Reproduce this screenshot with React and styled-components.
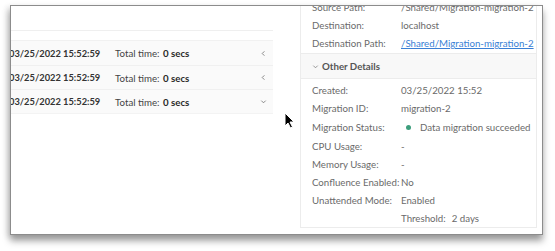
import React from 'react';
import styled, { createGlobalStyle } from 'styled-components';

const GlobalStyle = createGlobalStyle`
  html, body {
    margin: 0;
    padding: 0;
    background: #ffffff;
  }
  body {
    font-family: Lato, "Liberation Sans", sans-serif;
    -webkit-font-smoothing: antialiased;
  }
`;

const Stage = styled.div`
  position: relative;
  width: 555px;
  height: 251px;
  padding: 5px 0 0 10px;
  box-sizing: border-box;
  overflow: hidden;
`;

const Window = styled.div`
  width: 533px;
  height: 230px;
  box-sizing: border-box;
  border: 1px solid #8c8c8c;
  background: #ffffff;
  box-shadow: 0 6px 7px rgba(0, 0, 0, 0.35), -3px 2px 6px rgba(0, 0, 0, 0.12);
  display: flex;
  overflow: hidden;
`;

const LeftPane = styled.div`
  width: 262px;
  flex: none;
  overflow: hidden;
  padding-top: 24px;
`;

const TopRule = styled.div`
  width: 266px;
  height: 11px;
  border-top: 1px solid #efefef;
  border-bottom: 1px solid #f1f1f1;
  box-sizing: border-box;
`;

const RunList = styled.div`
  width: 262px;
  background: #fafafa;
  border-bottom: 1px solid #f3f3f3;
`;

const RunRow = styled.div`
  height: 24px;
  display: flex;
  align-items: center;
  margin-left: -2px;
  font-size: 9.7px;
  color: #2e2e2e;
  white-space: nowrap;
  border-top: ${p => (p.first ? 'none' : '1px solid #f0f0f0')};
  box-sizing: border-box;
`;

const Stamp = styled.span`
  width: 106px;
  flex: none;
  font-weight: 700;
  font-size: 9.3px;
  color: #333;
`;

const TotalLabel = styled.span`
  width: 48px;
  flex: none;
  color: #444;
`;

const TotalValue = styled.span`
  font-weight: 700;
  color: #2a2a2a;
  flex: 1;
`;

const Chevron = styled.span`
  width: 12px;
  flex: none;
  display: flex;
  justify-content: center;
  margin-right: 4px;
`;

const RightPane = styled.div`
  margin-left: 27px;
  margin-top: -8px;
  width: 237px;
  height: 230px;
  flex: none;
  box-sizing: border-box;
  border-left: 1px solid #ececec;
  border-right: 1px solid #ececec;
  border-bottom: 1px solid #ececec;
  display: flex;
  flex-direction: column;
`;

const Section = styled.div`
  padding: 0 0 0 11px;
  display: flex;
  flex-direction: column;
`;

const Row = styled.div`
  height: ${p => p.h || 18}px;
  display: flex;
  align-items: center;
  font-size: 9.7px;
  color: #6a6a6a;
  white-space: nowrap;
`;

const Label = styled.span`
  width: 89px;
  flex: none;
`;

const Value = styled.span`
  color: ${p => (p.link ? '#3a7fd5' : '#6a6a6a')};
  text-decoration: ${p => (p.link ? 'underline' : 'none')};
  display: flex;
  align-items: center;
`;

const Dot = styled.span`
  width: 5px;
  height: 5px;
  border-radius: 50%;
  background: #3d9e7c;
  margin: 0 9px 0 5px;
`;

const SectionHead = styled.div`
  height: 26px;
  margin-top: 1px;
  display: flex;
  align-items: center;
  padding-left: 11px;
  background: #f8f8f8;
  border-top: 1px solid #ececec;
  border-bottom: 1px solid #ececec;
  box-sizing: border-box;
  font-size: 9.7px;
  font-weight: 700;
  color: #555;
  gap: 3px;
`;

const Details = styled(Section)`
  padding-top: 2px;
`;

const Threshold = styled.span`
  color: #6a6a6a;
  margin-right: 6px;
`;

const Cursor = styled.svg`
  position: absolute;
  left: 284px;
  top: 112px;
`;

const Left = () => (
  <svg width="7" height="7" viewBox="0 0 8 8">
    <path d="M5 1.5 L2.5 4 L5 6.5" fill="none" stroke="#777" strokeWidth="1" />
  </svg>
);

const Down = ({ color = '#777' }) => (
  <svg width="7" height="7" viewBox="0 0 8 8">
    <path d="M1.5 3 L4 5.5 L6.5 3" fill="none" stroke={color} strokeWidth="1" />
  </svg>
);

const runs = [
  { open: false },
  { open: false },
  { open: true },
];

const details = [
  ['Created:', '03/25/2022 15:52'],
  ['Migration ID:', 'migration-2'],
];

export default function App() {
  return (
    <Stage>
      <GlobalStyle />
      <Window>
        <LeftPane>
          <TopRule />
          <RunList>
            {runs.map((run, i) => (
              <RunRow key={i} first={i === 0}>
                <Stamp>03/25/2022 15:52:59</Stamp>
                <TotalLabel>Total time:</TotalLabel>
                <TotalValue>0 secs</TotalValue>
                <Chevron>{run.open ? <Down /> : <Left />}</Chevron>
              </RunRow>
            ))}
          </RunList>
        </LeftPane>
        <RightPane>
          <Section>
            <Row>
              <Label>Source Path:</Label>
              <Value>/Shared/Migration-migration-2</Value>
            </Row>
            <Row>
              <Label>Destination:</Label>
              <Value>localhost</Value>
            </Row>
            <Row>
              <Label>Destination Path:</Label>
              <Value link>/Shared/Migration-migration-2</Value>
            </Row>
          </Section>
          <SectionHead>
            <Down color="#888" />
            Other Details
          </SectionHead>
          <Details>
            {details.map(([k, v]) => (
              <Row key={k}>
                <Label>{k}</Label>
                <Value>{v}</Value>
              </Row>
            ))}
            <Row h={20}>
              <Label>Migration Status:</Label>
              <Value>
                <Dot />
                Data migration succeeded
              </Value>
            </Row>
            <Row>
              <Label>CPU Usage:</Label>
              <Value>-</Value>
            </Row>
            <Row>
              <Label>Memory Usage:</Label>
              <Value>-</Value>
            </Row>
            <Row>
              <Label>Confluence Enabled:</Label>
              <Value>No</Value>
            </Row>
            <Row>
              <Label>Unattended Mode:</Label>
              <Value>Enabled</Value>
            </Row>
            <Row>
              <Label />
              <Value>
                <Threshold>Threshold:</Threshold>2 days
              </Value>
            </Row>
          </Details>
        </RightPane>
      </Window>
      <Cursor width="12" height="17" viewBox="0 0 12 17">
        <path d="M1 1 L1 14 L4 11 L6.5 16 L8.5 15 L6 10 L10 10 Z" fill="#000" stroke="#fff" strokeWidth="1" />
      </Cursor>
    </Stage>
  );
}
